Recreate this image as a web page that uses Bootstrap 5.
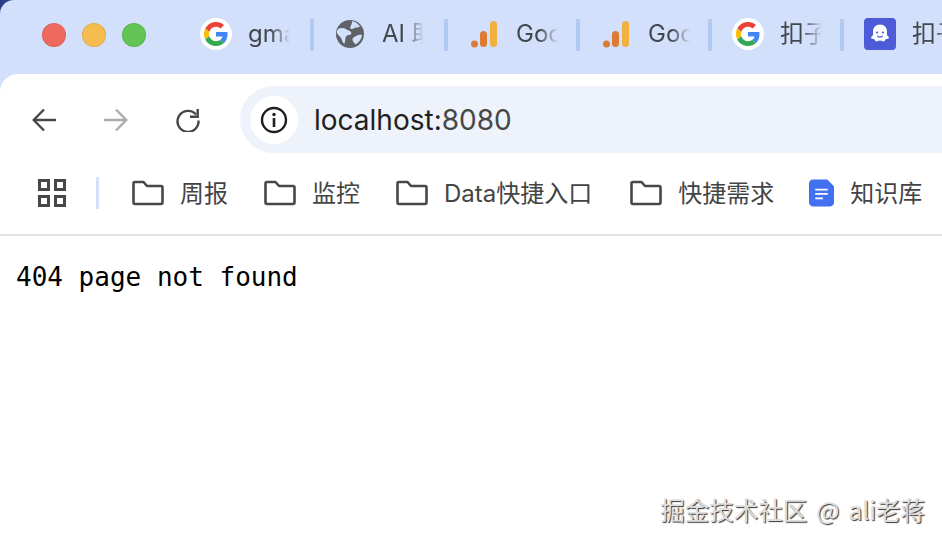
<!DOCTYPE html>
<html lang="zh">
<head>
  <meta charset="UTF-8" />
  <meta name="viewport" content="width=device-width, initial-scale=1.0"/>
  <title>localhost:8080</title>
  <link href="https://cdn.jsdelivr.net/npm/bootstrap@5.3.0/dist/css/bootstrap.min.css" rel="stylesheet"/>
  <script src="https://cdn.jsdelivr.net/npm/bootstrap@5.3.0/dist/js/bootstrap.bundle.min.js"></script>
<style>
  html, body { height: 100%; }
  body {
    background: #fff;
    font-family: "Inter", "Noto Sans CJK SC", sans-serif;
    overflow: hidden;
  }
  .ventana { height: 542px; background: #fff; }

  /* barra de pestañas */
  .esquina { background: #2d3f86; }
  .tira-tabs { height: 74px; padding-bottom: 6px; background: #d3e0fb; border-top-left-radius: 14px; }
  .semaforo { width: 200px; padding-left: 42px; margin-top: 2px; gap: 16px; }
  .luz { width: 24px; height: 24px; border-radius: 50%; border: 1px solid rgba(0,0,0,.08); }
  .luz-roja { background: #ee6a5f; }
  .luz-ambar { background: #f5bd4f; }
  .luz-verde { background: #61c454; }
  .pestana { width: 132px; flex: none; }
  .pestana-ancha { width: 134px; }
  .favicon { width: 32px; height: 32px; flex: none; }
  .pestana-txt {
    width: 42px;
    margin-left: 16px;
    margin-right: 18px;
    font-size: 24px;
    line-height: 32px;
    color: #43474e;
    white-space: nowrap;
    overflow: hidden;
    flex: none;
    -webkit-mask-image: linear-gradient(to right, #000 55%, transparent 100%);
    mask-image: linear-gradient(to right, #000 55%, transparent 100%);
  }
  .pestana-ancha .pestana-txt { margin-right: 20px; }
  .sep-tab { width: 4px; height: 32px; margin-top: 2px; background: #b2c9f3; flex: none; }
  .circulo-blanco { background: #fff; border-radius: 50%; }

  /* barra de direcciones */
  .fondo-toolbar { background: #d3e0fb; }
  .toolbar { height: 80px; background: #fff; border-top-left-radius: 18px; padding-top: 12px; }
  .caja-nav { height: 67px; padding-left: 32px; gap: 48px; flex: none; }
  .nav-btn { width: 24px; height: 24px; flex: none; }
  .caja-url {
    height: 67px;
    margin-left: 40px;
    padding-left: 10px;
    background: #eef2fa;
    border-radius: 34px 0 0 34px;
  }
  .info-url { width: 48px; height: 48px; flex: none; }
  .url-txt { margin-left: 16px; font-size: 28px; line-height: 40px; padding-top: 1px; color: #1f1f1f; }
  .url-puerto { color: #474747; }

  /* marcadores */
  .marcadores { height: 82px; border-bottom: 2px solid #e3e3e3; padding-left: 38px; padding-bottom: 2px; }
  .sep-marcador { width: 3px; height: 32px; background: #d3e0fb; margin-left: 30px; margin-right: 33px; flex: none; }
  .carpeta { width: 32px; height: 28px; flex: none; }
  .marcador { margin-right: 36px; gap: 16px; flex: none; }
  .marcador-datos { margin-right: 38px; }
  .marcador-req { margin-right: 35px; }
  .marcador-txt { font-size: 24px; line-height: 32px; padding-top: 1px; color: #444; white-space: nowrap; }
  .doc-icono { width: 25px; height: 28px; flex: none; }

  /* contenido */
  .contenido {
    margin: 0;
    padding: 24px 16px;
    font-family: "DejaVu Sans Mono", monospace;
    font-size: 26px;
    line-height: 34px;
    color: #000;
  }
  .marca-agua {
    position: absolute;
    right: 17px;
    top: 493px;
    font-family: "Noto Sans CJK SC", "Liberation Sans", sans-serif;
    font-size: 24.5px;
    line-height: 34px;
    word-spacing: 3.5px;
    color: #dedede;
    text-shadow: 1px 1px 1px #333;
    white-space: nowrap;
  }
</style>
</head>
<body>
<div class="ventana position-relative">

  <div class="esquina">
    <div class="tira-tabs d-flex align-items-center overflow-hidden">
      <div class="semaforo d-flex align-items-center flex-shrink-0">
        <span class="luz luz-roja"></span>
        <span class="luz luz-ambar"></span>
        <span class="luz luz-verde"></span>
      </div>

      <!-- gma -->
      <div class="pestana pestana-ancha d-flex align-items-center">
        <svg class="favicon" viewBox="0 0 32 32"><circle cx="16" cy="16" r="16" fill="#fff"/><g transform="translate(4 4)"><path fill="#ea4335" d="M12 4.700c1.800 0 3.400.6 4.600 1.800l3.400-3.400C17.900 1.200 15.200 0 12 0 7.300 0 3.300 2.700 1.300 6.600l4 3.100C6.200 6.800 8.900 4.700 12 4.700z"/><path fill="#4285f4" d="M23.500 12.300c0-.8-.1-1.600-.2-2.300H12v4.500h6.500c-.3 1.500-1.100 2.700-2.400 3.600l3.900 3c2.300-2.100 3.500-5.200 3.500-8.800z"/><path fill="#fbbc05" d="M5.300 14.300c-.2-.7-.4-1.500-.4-2.300s.1-1.600.4-2.300l-4-3.100C.5 8.200 0 10 0 12s.5 3.800 1.300 5.400l4-3.100z"/><path fill="#34a853" d="M12 24c3.200 0 6-1.100 8-2.900l-3.900-3c-1.100.7-2.500 1.200-4.100 1.200-3.100 0-5.800-2.100-6.700-5l-4 3.100C3.300 21.300 7.300 24 12 24z"/></g></svg>
        <span class="pestana-txt">gma</span>
        <span class="sep-tab"></span>
      </div>

      <!-- AI -->
      <div class="pestana pestana-ancha d-flex align-items-center">
        <svg class="favicon" viewBox="0 0 32 32"><circle cx="16" cy="16" r="14" fill="#5f6368"/><path fill="#d3e0fb" d="M4 11c3-1.500 6-1.500 8 0s3.500 1.500 5 3c1 1.500 0 3-2 3s-3 1-3.500 3-.5 4-1 6c-2-1.500-2.500-4-3.500-6s-3.500-3-4-5 .5-3 1-4zM18 3c3 .5 6 2.500 8 5.500-2 1.500-4 .5-5.500 1.500s-3 1.500-4 .5.5-2.500 1-4 .5-2.500.5-3.500zM22 18c2-1 4-1.500 6-1-.5 4-3 7.500-6.500 9.500-1-1.500-3-3-3-5s1.500-2.500 3.500-3.500z"/></svg>
        <span class="pestana-txt">AI 助手</span>
        <span class="sep-tab"></span>
      </div>

      <!-- Google Analytics -->
      <div class="pestana d-flex align-items-center">
        <svg class="favicon" viewBox="0 0 32 32"><circle cx="6.500" cy="26" r="3.500" fill="#dd7b35"/><rect x="12" y="13" width="7" height="16" rx="3.500" fill="#dd7b35"/><rect x="22" y="3" width="7" height="26" rx="3.500" fill="#f2b03e"/></svg>
        <span class="pestana-txt">Goo</span>
        <span class="sep-tab"></span>
      </div>
      <div class="pestana d-flex align-items-center">
        <svg class="favicon" viewBox="0 0 32 32"><circle cx="6.500" cy="26" r="3.500" fill="#dd7b35"/><rect x="12" y="13" width="7" height="16" rx="3.500" fill="#dd7b35"/><rect x="22" y="3" width="7" height="26" rx="3.500" fill="#f2b03e"/></svg>
        <span class="pestana-txt">Goo</span>
        <span class="sep-tab"></span>
      </div>

      <!-- 扣子 -->
      <div class="pestana d-flex align-items-center">
        <svg class="favicon" viewBox="0 0 32 32"><circle cx="16" cy="16" r="16" fill="#fff"/><g transform="translate(4 4)"><path fill="#ea4335" d="M12 4.700c1.800 0 3.400.6 4.600 1.800l3.400-3.400C17.900 1.200 15.200 0 12 0 7.300 0 3.300 2.700 1.300 6.600l4 3.100C6.200 6.800 8.900 4.700 12 4.700z"/><path fill="#4285f4" d="M23.500 12.300c0-.8-.1-1.600-.2-2.300H12v4.500h6.500c-.3 1.500-1.100 2.700-2.400 3.600l3.900 3c2.300-2.100 3.500-5.200 3.500-8.800z"/><path fill="#fbbc05" d="M5.300 14.300c-.2-.7-.4-1.500-.4-2.300s.1-1.600.4-2.300l-4-3.100C.5 8.200 0 10 0 12s.5 3.800 1.300 5.400l4-3.100z"/><path fill="#34a853" d="M12 24c3.200 0 6-1.100 8-2.900l-3.900-3c-1.100.7-2.500 1.200-4.100 1.200-3.100 0-5.800-2.100-6.700-5l-4 3.100C3.300 21.300 7.300 24 12 24z"/></g></svg>
        <span class="pestana-txt">扣子</span>
        <span class="sep-tab"></span>
      </div>
      <div class="pestana d-flex align-items-center">
        <svg class="favicon" viewBox="0 0 32 32"><rect width="32" height="32" rx="4" fill="#4c5bd8"/><path fill="#fff" d="M16 6.500c-4.300 0-7 3.200-7 7v3.500c0 .8-2 1.500-2 2.700 0 1.200 2 1 3 1.300.8.300 1 2.500 2.500 2.500 1 0 1.500-1 3.500-1s2.500 1 3.500 1c1.500 0 1.700-2.200 2.500-2.500 1-.3 3-.1 3-1.300 0-1.200-2-1.900-2-2.700v-3.500c0-3.800-2.700-7-7-7z"/><circle cx="13" cy="14.500" r="1.100" fill="#4c5bd8"/><circle cx="19" cy="14.500" r="1.100" fill="#4c5bd8"/><path d="M13.500 18c1.500 1.300 3.500 1.300 5 0" fill="none" stroke="#4c5bd8" stroke-width="1.100" stroke-linecap="round"/></svg>
        <span class="pestana-txt">扣子</span>
      </div>
    </div>
  </div>

  <div class="fondo-toolbar">
    <div class="toolbar d-flex align-items-start">
      <div class="d-flex align-items-center caja-nav">
        <svg class="nav-btn" viewBox="0 0 24 24" fill="none" stroke="#474747" stroke-width="2.400"><path d="M24 12H2M12 1.500 1.700 12 12 22.500"/></svg>
        <svg class="nav-btn" viewBox="0 0 24 24" fill="none" stroke="#acacac" stroke-width="2.400"><path d="M0 12h22M12 1.500 22.300 12 12 22.500"/></svg>
        <svg class="nav-btn" viewBox="0 0 24 24" fill="none" stroke="#474747" stroke-width="2.400"><path d="M20 6.500A10.500 10.500 0 1 0 22.500 12.500"/><path d="M21.700 1v7.700H14"/></svg>
      </div>
      <div class="caja-url d-flex align-items-center flex-grow-1">
        <div class="info-url circulo-blanco d-flex align-items-center justify-content-center">
          <svg width="28" height="28" viewBox="0 0 28 28"><circle cx="14" cy="14" r="12" fill="none" stroke="#1f1f1f" stroke-width="2.400"/><rect x="12.700" y="12" width="2.600" height="9" fill="#1f1f1f"/><circle cx="14" cy="8.500" r="1.700" fill="#1f1f1f"/></svg>
        </div>
        <span class="url-txt">localhost:<span class="url-puerto">8080</span></span>
      </div>
    </div>
  </div>

  <div class="marcadores d-flex align-items-center">
    <svg width="28" height="28" viewBox="0 0 28 28" fill="none" stroke="#474747" stroke-width="3" class="flex-shrink-0"><rect x="1.500" y="1.500" width="9" height="9"/><rect x="17.500" y="1.500" width="9" height="9"/><rect x="1.500" y="17.500" width="9" height="9"/><rect x="17.500" y="17.500" width="9" height="9"/></svg>
    <span class="sep-marcador"></span>

    <div class="marcador d-flex align-items-center">
      <svg class="carpeta" viewBox="0 0 32 28" fill="none" stroke="#474747" stroke-width="2.600" stroke-linejoin="round"><path d="M1.500 4.500c0-1 .8-1.500 1.500-1.500h8.500l3.500 4h14c1 0 1.500.7 1.500 1.500v15c0 1-.7 1.500-1.500 1.500H3c-1 0-1.500-.7-1.500-1.500z"/></svg>
      <span class="marcador-txt">周报</span>
    </div>
    <div class="marcador d-flex align-items-center">
      <svg class="carpeta" viewBox="0 0 32 28" fill="none" stroke="#474747" stroke-width="2.600" stroke-linejoin="round"><path d="M1.500 4.500c0-1 .8-1.500 1.500-1.500h8.500l3.500 4h14c1 0 1.500.7 1.500 1.500v15c0 1-.7 1.500-1.500 1.500H3c-1 0-1.500-.7-1.500-1.500z"/></svg>
      <span class="marcador-txt">监控</span>
    </div>
    <div class="marcador marcador-datos d-flex align-items-center">
      <svg class="carpeta" viewBox="0 0 32 28" fill="none" stroke="#474747" stroke-width="2.600" stroke-linejoin="round"><path d="M1.500 4.500c0-1 .8-1.500 1.500-1.500h8.500l3.500 4h14c1 0 1.500.7 1.500 1.500v15c0 1-.7 1.500-1.500 1.500H3c-1 0-1.500-.7-1.500-1.500z"/></svg>
      <span class="marcador-txt">Data快捷入口</span>
    </div>
    <div class="marcador marcador-req d-flex align-items-center">
      <svg class="carpeta" viewBox="0 0 32 28" fill="none" stroke="#474747" stroke-width="2.600" stroke-linejoin="round"><path d="M1.500 4.500c0-1 .8-1.500 1.500-1.500h8.500l3.500 4h14c1 0 1.500.7 1.500 1.500v15c0 1-.7 1.500-1.500 1.500H3c-1 0-1.500-.7-1.500-1.500z"/></svg>
      <span class="marcador-txt">快捷需求</span>
    </div>
    <div class="marcador d-flex align-items-center">
      <svg class="doc-icono" viewBox="0 0 26 28"><path fill="#4270ee" d="M4 0h15l7 7v17c0 2.200-1.800 4-4 4H4c-2.200 0-4-1.800-4-4V4c0-2.200 1.800-4 4-4z"/><path stroke="#fff" stroke-width="1.800" d="M6.500 10.500h13M6.500 15h13M6.500 19.500h8"/></svg>
      <span class="marcador-txt">知识库</span>
    </div>
  </div>

  <pre class="contenido">404 page not found</pre>

  <div class="marca-agua">掘金技术社区 @ ali老蒋</div>
</div>
</body>
</html>
